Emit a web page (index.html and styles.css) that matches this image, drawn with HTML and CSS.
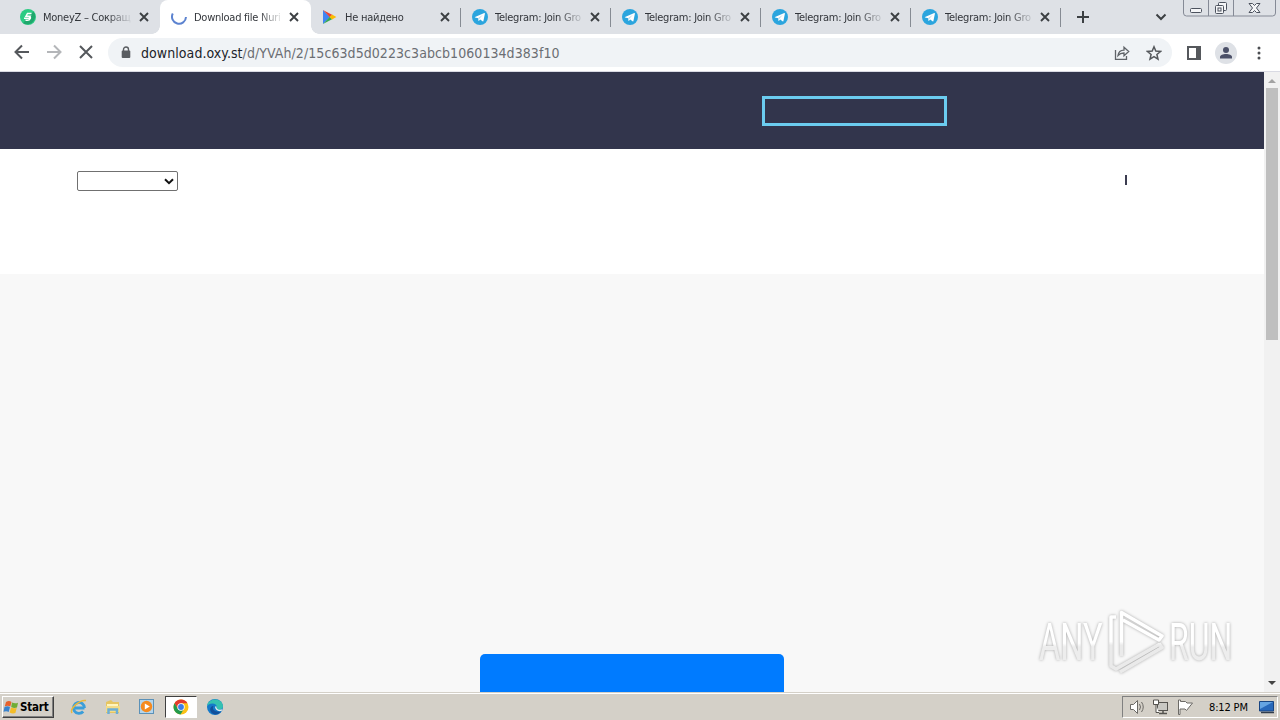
FILE: index.html
```html
<!DOCTYPE html>
<html lang="en">
<head>
<meta charset="utf-8">
<title>Download file</title>
<link rel="stylesheet" href="styles.css">
</head>
<body>
<svg class="defs" width="0" height="0">
  <symbol id="close" viewBox="0 0 10 10"><path d="M1 1l8 8M9 1l-8 8" stroke="#3c4043" stroke-width="1.9" fill="none"/></symbol>
  <symbol id="telegram" viewBox="0 0 16 16"><circle cx="8" cy="8" r="8" fill="#2ca5de"/><path d="M3 7.9l9.3-3.8c.4-.1.7.1.6.6l-1.5 7.2c-.1.5-.5.6-.9.4L8.200 10.600l-1.200 1.200c-.3.3-.6.2-.6-.2l-.2-2.400-3.100-.8c-.4-.1-.4-.4-.1-.5z" fill="#fff"/><path d="M6.300 9.100l4.700-3.300-3.700 4-.5 1.500z" fill="#b5d9ec"/></symbol>
</svg>

<header class="tabs">
  <div class="tab first">
    <svg class="fav" viewBox="0 0 16 16"><circle cx="8" cy="8" r="8" fill="#2bcb83"/><path d="M13.500 2.500A8 8 0 0 1 3 14.200L8 8z" fill="#20a76d"/><path d="M11.500 4.500H7.500L6 7.200h4.200L9 9.300H4M9.600 7.300c1.500.4 1 4-2.300 4H5.500" fill="none" stroke="#fff" stroke-width="1.500"/></svg>
    <span class="label">MoneyZ – Сокращ</span><svg class="x"><use href="#close"/></svg>
  </div>
  <div class="tab active">
    <svg class="fav" viewBox="0 0 16 16"><path d="M1.800 4.500A7 7 0 1 0 15 8" fill="none" stroke="#5c83d0" stroke-width="2"/></svg>
    <span class="label">Download file Nuri</span><svg class="x"><use href="#close"/></svg>
  </div>
  <div class="tab line">
    <svg class="fav" viewBox="0 0 16 16"><path d="M1 1v14l7-7z" fill="#4285f4"/><path d="M1 1l9.500 4.900L7.800 8.300z" fill="#ea4335"/><path d="M1 15l9.500-4.900L7.800 7.700z" fill="#34a853"/><path d="M10 5.600L14.400 8 10 10.400 7.500 8z" fill="#fbbc04"/></svg>
    <span class="label">Не найдено</span><svg class="x"><use href="#close"/></svg>
  </div>
  <div class="tab line"><svg class="fav"><use href="#telegram"/></svg><span class="label">Telegram: Join Gro</span><svg class="x"><use href="#close"/></svg></div>
  <div class="tab line"><svg class="fav"><use href="#telegram"/></svg><span class="label">Telegram: Join Gro</span><svg class="x"><use href="#close"/></svg></div>
  <div class="tab line"><svg class="fav"><use href="#telegram"/></svg><span class="label">Telegram: Join Gro</span><svg class="x"><use href="#close"/></svg></div>
  <div class="tab line"><svg class="fav"><use href="#telegram"/></svg><span class="label">Telegram: Join Gro</span><svg class="x"><use href="#close"/></svg></div>
  <svg class="plus" width="12" height="12"><path d="M6 0v12M0 6h12" stroke="#3c4043" stroke-width="2"/></svg>
  <svg class="chevron" width="12" height="8"><path d="M1.500 1.500L6 6l4.500-4.500" fill="none" stroke="#3c4043" stroke-width="2"/></svg>
  <svg class="winbtns" width="94" height="17" fill="none" stroke="#4c525e">
    <path d="M.5 0v13q0 3 3 3h86q3 0 3-3V0M25.500 0v16M50.500 0v16" stroke="#858a96"/>
    <rect x="7.500" y="8.500" width="11" height="4" rx="1" fill="#f4f5f7"/>
    <rect x="35.500" y="2.500" width="8" height="8" rx="1" fill="#f4f5f7"/><rect x="32.500" y="5.500" width="8" height="8" rx="1" fill="#f4f5f7"/><rect x="35" y="8" width="3" height="3"/>
    <path d="M66 3.500h3.500l2 2 2-2H77l-3.500 4.500 3.500 4.500h-3.500l-2-2-2 2H66L69.500 8z" fill="#f4f5f7"/>
  </svg>
</header>

<nav class="toolbar">
  <svg class="navicons" width="108" height="37" fill="none" stroke-width="2">
    <path d="M29 18H16M22 11.500L15.500 18l6.500 6.500" stroke="#55585c"/>
    <path d="M47 18h13M54 11.500l6.500 6.500-6.500 6.500" stroke="#b4b6b9"/>
    <path d="M80 12l12 12M92 12L80 24" stroke="#55585c"/>
  </svg>
  <div class="omnibox">
    <svg class="lock" width="10" height="13"><path d="M2.500 5V3.500a2.500 2.500 0 0 1 5 0V5" fill="none" stroke="#5a5d61" stroke-width="1.400"/><rect x=".7" y="4.500" width="8.600" height="7.500" rx="1" fill="#5a5d61"/></svg>
    <span class="url">download.oxy.st<span class="path">/d/YVAh/2/15c63d5d0223c3abcb1060134d383f10</span></span>
    <svg class="share" width="16" height="16" fill="none" stroke="#5f6368" stroke-width="1.300"><path d="M1.500 5v9.300h11V11M4 10.500c.4-3.500 2.500-5.300 6-5.400V2.200L14.700 6.500 10 10.700V8C7.500 8 5.500 8.700 4 10.500z"/></svg>
    <svg class="star" width="16" height="16"><path d="M8 1.800l1.800 4.300 4.700.4-3.600 3 1.100 4.600L8 11.700l-4 2.400 1.100-4.600-3.600-3 4.700-.4z" fill="none" stroke="#55585c" stroke-width="1.500"/></svg>
  </div>
  <svg class="panel" width="14" height="14"><rect x="1" y="1" width="12" height="12" fill="none" stroke="#55585c" stroke-width="2"/><path d="M9 1h4v12H9z" fill="#55585c"/></svg>
  <svg class="avatar" width="22" height="22"><circle cx="11" cy="11" r="11" fill="#dee1e6"/><circle cx="11" cy="8" r="3" fill="#4b5068"/><path d="M5 16.500v-1.500c0-4 12-4 12 0v1.500z" fill="#4b5068"/></svg>
  <svg class="dots" width="4" height="14" fill="#4b4e52"><circle cx="2" cy="2" r="1.500"/><circle cx="2" cy="7" r="1.500"/><circle cx="2" cy="12" r="1.500"/></svg>
</nav>

<main class="view">
  <div class="site">
    <div class="sitehead"><div class="focusbox"></div></div>
    <div class="sitebar">
      <div class="select"><svg width="10" height="7"><path d="M1 1.200l4 4 4-4" fill="none" stroke="#111" stroke-width="2"/></svg></div>
      <i class="tick"></i>
    </div>
    <div class="content"><div class="bluebtn"></div></div>
  </div>
  <div class="scroll">
    <svg width="16" height="16"><path d="M4 11h8L8 7z" fill="#a3a3a3"/></svg>
    <div class="thumb"></div>
    <svg class="down" width="16" height="16"><path d="M4 5h8L8 9z" fill="#444"/></svg>
  </div>
  <svg class="watermark" width="204" height="70">
    <defs>
      <linearGradient id="fade" x1="0" y1="0" x2="0" y2="1"><stop offset=".52" stop-color="#fff"/><stop offset=".58" stop-color="#ededed"/></linearGradient>
      <linearGradient id="arrow" gradientUnits="userSpaceOnUse" x1="0" y1="5" x2="0" y2="66"><stop offset=".5" stop-color="#fff"/><stop offset=".56" stop-color="#eaeaea"/></linearGradient>
    </defs>
    <g class="wmtext" fill="url(#fade)">
      <text transform="translate(5 54) scale(.63 1)" textLength="101" lengthAdjust="spacingAndGlyphs">ANY</text>
      <text transform="translate(135 54) scale(.62 1)" textLength="102" lengthAdjust="spacingAndGlyphs">RUN</text>
    </g>
    <g class="wmarrow" fill="none" stroke="url(#arrow)" stroke-width="3.500" stroke-linejoin="round">
      <path d="M82 11h-5v49l5 3 44-25"/><path d="M87.500 50V6.500L128 30l-3 4-36-20"/><path d="M86 66l42-24.500-3-4"/>
    </g>
  </svg>
</main>

<footer class="taskbar">
  <div class="start"><svg width="17" height="16"><path d="M3 3q3-2 5.500 0L7.300 7.500Q5 6 1.800 7.300z" fill="#e8622c"/><path d="M9 3.500q3 1.500 6 .2L14 8.500q-3 1-5.800-.5z" fill="#70ad35"/><path d="M1.500 8q3-1.500 5.500 0L5.700 13Q3.500 11.500.5 12.700z" fill="#3a83cd"/><path d="M8 8.600q3 1.300 5.700.3L12.400 14q-3 1-5.700-.5z" fill="#f4bd28"/></svg><b>Start</b></div>
  <div class="launch">
    <svg width="18" height="18"><path d="M14.500 10H5M14.500 10a5.500 5.500 0 1 0-1.300 3.500" fill="none" stroke="#3b9ed9" stroke-width="2.800"/><path d="M2 15C-.5 11 9 1.500 16 2.500" fill="none" stroke="#e9b83c" stroke-width="1.500"/></svg>
  </div>
  <div class="launch">
    <svg width="18" height="18"><path d="M2 4l5-2 2 2h6v11H2z" fill="#e6c562"/><path d="M3 6h11v3H3z" fill="#fff5bd"/><path d="M2 8h14v6H2z" fill="#f4dc87"/><path d="M4.500 16v-4.500h8.500V16" fill="none" stroke="#6daed5" stroke-width="2.500"/></svg>
  </div>
  <div class="launch">
    <svg width="18" height="18"><rect x="1.500" y="1.500" width="14" height="14" fill="#b4d5ec" stroke="#5b91b8"/><circle cx="8.500" cy="8.500" r="5.700" fill="#f58a1f"/><path d="M6.800 5.500v6l5-3z" fill="#fff"/></svg>
  </div>
  <div class="launch pressed">
    <svg width="16" height="16"><circle cx="8" cy="8" r="7.500" fill="#fbc116"/><path d="M1.500 4.250A7.500 7.500 0 0 1 14.500 4.250H8L5 10z" fill="#e33b2e"/><path d="M1.500 4.250A7.500 7.500 0 0 0 7.500 15.500L11 9.800 8 11.500 5 10z" fill="#229a4d"/><circle cx="8" cy="8" r="3.700" fill="#fff"/><circle cx="8" cy="8" r="2.900" fill="#3b7de8"/></svg>
  </div>
  <div class="launch">
    <svg width="18" height="18"><circle cx="9" cy="9" r="8" fill="#1479c9"/><path d="M1 8C2-.5 16-1 17 8c0 4-5 4.500-6.500 2.800C12 8 9.500 5.500 6.500 5.500S1.500 7 1 8z" fill="#35c1b1"/><path d="M7.500 8c-2 3 1 6.500 7.500 5.500-3 4.500-9 3.500-10.500-.5C3.500 10 5.500 8 7.500 8z" fill="#124f9b"/><path d="M10.500 8.500c-.5 2.500 2 4 6 2.700l-1 1.800c-4 .8-6.500-1.500-6.500-4.500z" fill="#e6eef0"/></svg>
  </div>
  <div class="tray">
    <svg width="18" height="18" fill="#fff" stroke="#6c6a66"><path d="M2.500 6.500h3L9.500 2.500v13L5.500 11.500h-3z"/><path d="M11.500 6q2 3 0 6M13.500 4q3.500 5 0 10" fill="none"/></svg>
    <svg width="18" height="18" stroke="#55534f"><rect x="5.500" y="4.500" width="10" height="8" fill="#c9c8c3"/><path d="M7 15.500h8M11 13v2" stroke-width="1.500"/><path d="M1.500 2v4.500h5V2zM4 6.500v8h3" fill="#fff"/></svg>
    <svg width="18" height="18" fill="#fff" stroke="#6c6a66"><path d="M2.500 2v14.500h1.500V11h5l1.500 1.500L16.500 5H11L9.500 3.500h-5V2z"/></svg>
    <span class="clock">8:12 PM</span>
    <svg class="desk" width="18" height="16"><path d="M1.500 2.500h14v9.500h-14z" fill="#2868ba" stroke="#184582"/><path d="M2 3h13L2 10z" fill="#65a4e2"/><path d="M3 13.500h13" stroke="#303c4c" stroke-width="1.500"/></svg>
  </div>
</footer>
</body>
</html>
```
FILE: styles.css
```css
* { box-sizing: border-box; }
body {
  margin: 0; width: 1280px; height: 720px; overflow: hidden;
  display: flex; flex-direction: column; background: #fff;
  font-family: "DejaVu Sans Condensed", "DejaVu Sans", sans-serif;
  font-stretch: condensed;
}
svg { display: block; flex: none; }
.defs { position: absolute; }
.tabs { height: 34px; flex: none; background: #dee1e6; display: flex; padding-left: 10px; }
.tab { width: 150px; height: 34px; flex: none; display: flex; align-items: center; padding-left: 11px; position: relative; }
.tab.first { width: 150px; padding-left: 10px; }
.tab.active { width: 151px; background: #fff; border-radius: 8px 8px 0 0; padding-left: 11px; }
.tab.active::before, .tab.active::after { content: ""; position: absolute; bottom: 0; width: 8px; height: 8px; }
.tab.active::before { left: -8px; background: radial-gradient(circle at 0 0, #dee1e6 7.5px, #fff 8px); }
.tab.active::after { right: -8px; background: radial-gradient(circle at 100% 0, #dee1e6 7.5px, #fff 8px); }
.tab.line::after { content: ""; position: absolute; right: 0; top: 8px; width: 1px; height: 19px; background: #868b93; }
.fav { width: 16px; height: 16px; }
.label {
  width: 90px; margin: 1px 0 0 7px; white-space: nowrap; font-size: 11px; line-height: 16px;
  letter-spacing: -.25px; color: #33363b;
  -webkit-mask-image: linear-gradient(90deg, #000 64px, transparent 90px);
  mask-image: linear-gradient(90deg, #000 64px, transparent 90px);
}
.x { width: 10px; height: 10px; margin-left: 5px; }
.first .x, .active .x { margin-left: 6px; }
.active .x { margin-left: 5px; }
.plus { margin: 11px 0 0 16px; }
.chevron { margin: 13px 0 0 66px; }
.winbtns { margin-left: 16px; }
.toolbar { height: 38px; flex: none; display: flex; align-items: center; border-bottom: 1px solid #d9dae3; }
.omnibox { width: 1064px; height: 29px; border-radius: 15px; background: #f0f3f6; display: flex; align-items: center; }
.lock { margin-left: 13px; }
.url { margin-left: 10px; width: 440px; font-size: 14px; line-height: 20px; letter-spacing: .067px; white-space: nowrap; color: #202329; }
.path { color: #6b6e73; }
.share { margin-left: 533px; }
.star { margin-left: 16px; }
.panel { margin-left: 15px; }
.avatar { margin-left: 14px; }
.dots { margin-left: 20px; }
.view { height: 620px; flex: none; display: flex; position: relative; }
.site { width: 1264px; display: flex; flex-direction: column; }
.sitehead { height: 77px; background: #32354c; padding: 24px 0 0 762px; }
.focusbox { width: 185px; height: 30px; border: 3px solid #6bccef; }
.sitebar { height: 125px; background: #fff; display: flex; padding: 22px 137px 0 77px; justify-content: space-between; }
.select { width: 101px; height: 20px; border: 1px solid #707070; border-radius: 2px; display: flex; justify-content: flex-end; align-items: center; padding-right: 3px; }
.tick { width: 2px; height: 10px; margin-top: 4px; background: #3b3c50; }
.content { flex: 1; background: #f8f8f8; display: flex; align-items: flex-end; padding-left: 480px; }
.bluebtn { width: 304px; height: 38px; background: #007bff; border-radius: 5px 5px 0 0; }
.scroll { width: 16px; background: #f1f1f1; display: flex; flex-direction: column; align-items: center; }
.thumb { width: 12px; height: 252px; background: #bfbfbf; }
.down { margin-top: auto; }
.watermark { position: absolute; left: 1034px; top: 534px; overflow: visible; }
.wmtext { font: 400 51px Roboto, sans-serif; filter: drop-shadow(0 0 1.5px rgba(0,0,0,.32)); }
.wmarrow { filter: drop-shadow(0 0 1.5px rgba(0,0,0,.32)); }
.taskbar { height: 28px; flex: none; background: #d4d0c8; box-shadow: inset 0 1px #d4d0c8, inset 0 2px #fff; display: flex; align-items: center; padding: 2px 2px 0; }
.start { width: 52px; height: 22px; border: 1px solid; border-color: #fff #404040 #404040 #fff; box-shadow: inset -1px -1px #808080; display: flex; align-items: center; font-size: 11.5px; margin-right: 7px; }
.start b { letter-spacing: -.2px; }
.launch { width: 32px; height: 22px; margin-left: 2px; display: flex; align-items: center; justify-content: center; }
.launch.pressed { background: #fff; border: 1px solid; border-color: #404040 #fff #fff #404040; }
.tray { width: 156px; height: 22px; margin-left: auto; border: 1px solid; border-color: #808080 #fff #fff #808080; display: flex; align-items: center; padding-left: 5px; gap: 6px; }
.clock { width: 43px; margin-left: 9px; font-size: 11px; letter-spacing: -.15px; white-space: nowrap; }
```
